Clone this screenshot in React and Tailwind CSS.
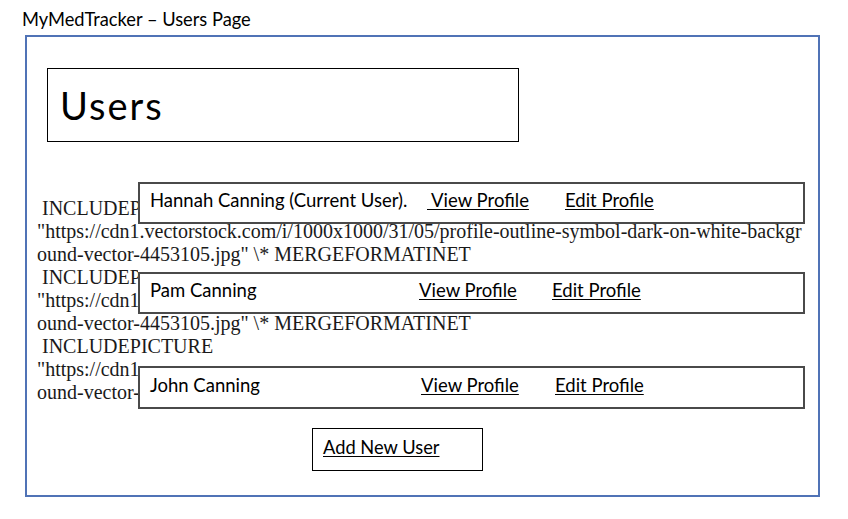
// App.jsx
import React from 'react';

const URL_HEAD = '"https://cdn1.vectorstock.com/i/1000x1000/31/05/profile-outline-symbol-dark-on-white-backgr';
const URL_TAIL = 'ound-vector-4453105.jpg" \\* MERGEFORMATINET';

// las filas de usuarios que tapan el texto del campo
const users = [
  { name: 'Hannah Canning (Current User).', pos: 'top-[-15px] h-[42px] shadow-[0_-4px_0_0_#fff]', nameW: 'w-[277px]', viewW: 'w-[138px]', lead: true },
  { name: 'Pam Canning', pos: 'top-[75px] h-[42px] shadow-[0_-4px_0_0_#fff]', nameW: 'w-[269px]', viewW: 'w-[133px]' },
  { name: 'John Canning', pos: 'top-[169px] h-[43px] shadow-[0_-9px_0_0_#fff]', nameW: 'w-[271px]', viewW: 'w-[134px]' },
];

const FieldText = () => (
  <>
    {[0, 1, 2].map((i) => (
      <React.Fragment key={i}>
        <div>&nbsp;INCLUDEPICTURE</div>
        <div>{URL_HEAD}</div>
        <div>{URL_TAIL}</div>
      </React.Fragment>
    ))}
  </>
);

const UserRow = ({ user }) => (
  <div
    className={`absolute left-[111px] w-[667px] ${user.pos} bg-white border-2 border-[#4a4a4a] flex items-center pl-[10px] pb-[6px] text-[18.5px] leading-[18px] text-black font-[family-name:Lato,sans-serif]`}
  >
    <span className={`${user.nameW} whitespace-nowrap`}>{user.name}</span>
    <span className={`${user.viewW} whitespace-nowrap`}>
      <a className="underline underline-offset-2 decoration-1 cursor-pointer">
        {user.lead ? '\u00a0View Profile' : 'View Profile'}
      </a>
    </span>
    <a className="underline underline-offset-2 decoration-1 whitespace-nowrap cursor-pointer">Edit Profile</a>
  </div>
);

const App = () => {
  return (
    <div className="w-[848px] h-[519px] bg-white overflow-hidden font-[family-name:Lato,sans-serif] text-black">
      {/* Titulo */}
      <div className="h-[35px] pt-[10px] pl-[22px] text-[18.3px] leading-[18px]">MyMedTracker – Users Page</div>

      {/* Marco de la pagina */}
      <div className="ml-[25px] w-[795px] h-[462px] border-2 border-[#5073b6]">
        <div className="ml-[20px] mt-[31px] w-[472px] h-[74px] border border-black flex items-center pl-[12px] text-[38px] leading-[38px] tracking-[2px]">
          Users
        </div>

        <div className="relative mt-[55px] pl-[10px] font-[family-name:'Liberation_Serif',serif] text-[20px] leading-[23px] text-[#1a1a1a] whitespace-nowrap">
          <FieldText />
          {users.map((u) => (
            <UserRow key={u.name} user={u} />
          ))}
        </div>

        <div className="ml-[285px] mt-[24px] w-[171px] h-[43px] border border-black flex items-center pl-[10px] pb-[5px] text-[18.3px] leading-[18px]">
          <a className="underline underline-offset-2 decoration-1 cursor-pointer">Add New User</a>
        </div>
      </div>
    </div>
  );
};

export default App;
